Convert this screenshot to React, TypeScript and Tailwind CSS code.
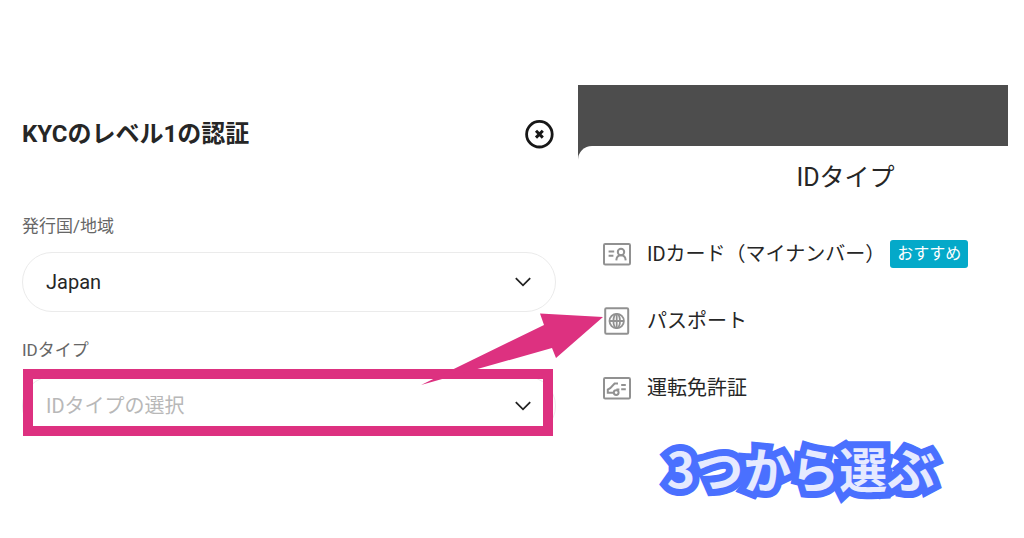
import { useState } from "react";
import type { ReactNode } from "react";

interface IdOption {
  value: string;
  label: string;
  icon: ReactNode;
  recommended?: boolean;
}

const CardIcon = () => (
  <svg viewBox="0 0 28 28" className="size-7" fill="none" stroke="#919191" strokeWidth="2" aria-hidden="true">
    <rect x="1" y="4" width="26" height="20.4" rx="1.2" />
    <path d="M5.6 11.6h5.6M5.6 15.8h4.8" />
    <circle cx="18" cy="12" r="3.2" />
    <path d="M13.3 20.4c.2-3.2 2-5.1 4.7-5.1s4.5 1.9 4.7 5.1" />
  </svg>
);

const PassportIcon = () => (
  <svg viewBox="0 0 28 28" className="size-7" fill="none" stroke="#919191" strokeWidth="2" aria-hidden="true">
    <rect x="2.2" y="1.2" width="23" height="25.6" rx="1.2" />
    <g strokeWidth="1.8">
      <circle cx="13.7" cy="14" r="7.2" />
      <ellipse cx="13.7" cy="14" rx="3.3" ry="7.2" />
      <path d="M6.5 14h14.4M13.7 7v14" />
    </g>
  </svg>
);

const LicenseIcon = () => (
  <svg viewBox="0 0 28 28" className="size-7" fill="none" stroke="#919191" strokeWidth="2" aria-hidden="true">
    <rect x="1" y="4" width="26" height="20.4" rx="1.2" />
    <path d="M15 9.6h-3.4l-4.4 4.6-2.4 1.4v3.2h5.6M16.4 15.4h-3" />
    <circle cx="13.2" cy="18.6" r="2.4" />
    <path d="M18.2 11h4.6M18.2 15.2h4.6" />
  </svg>
);

const ChevronIcon = () => (
  <svg
    viewBox="0 0 16 10"
    className="pointer-events-none absolute top-1/2 right-[25px] h-[10px] w-4 -translate-y-1/2"
    fill="none"
    stroke="#222"
    strokeWidth="1.8"
    aria-hidden="true"
  >
    <path d="M.8 1.2 8 8.3l7.2-7.1" />
  </svg>
);

const idOptions: IdOption[] = [
  { value: "card", label: "IDカード（マイナンバー）", icon: <CardIcon />, recommended: true },
  { value: "passport", label: "パスポート", icon: <PassportIcon /> },
  { value: "license", label: "運転免許証", icon: <LicenseIcon /> },
];

const selectClass =
  "block h-[60px] w-full appearance-none rounded-full border border-[#ebebeb] bg-white px-[23px] text-xl outline-none";

export default function App() {
  const [country, setCountry] = useState("jp");
  const [idType, setIdType] = useState("");

  return (
    <main className="grid grid-cols-[534fr_430fr] items-start gap-[22px] bg-white pr-4 pl-[22px] font-['Roboto','Noto_Sans_CJK_JP',sans-serif] text-[#262626]">
      <form className="pt-[116px]" onSubmit={(e) => e.preventDefault()}>
        <div className="flex items-center justify-between pr-[2px]">
          <h1 className="text-2xl leading-9 font-bold">KYCのレベル1の認証</h1>
          <button type="button" aria-label="閉じる">
            <svg viewBox="0 0 30 30" className="size-[30px]" fill="none" stroke="#171717" aria-hidden="true">
              <circle cx="15.4" cy="15.2" r="12.8" strokeWidth="2.8" />
              <path d="m12 11.8 6.8 6.8m0-6.8-6.8 6.8" strokeWidth="3" />
            </svg>
          </button>
        </div>

        <label htmlFor="country" className="mt-[62px] block text-[17px] leading-6 text-[#666]">
          発行国/地域
        </label>
        <div className="relative mt-[14px]">
          <select
            id="country"
            value={country}
            onChange={(e) => setCountry(e.target.value)}
            className={selectClass}
          >
            <option value="jp">Japan</option>
          </select>
          <ChevronIcon />
        </div>

        <label htmlFor="id-type" className="mt-[26px] block text-[17px] leading-6 text-[#666]">
          IDタイプ
        </label>
        <div className="relative mt-[14px]">
          <select
            id="id-type"
            value={idType}
            onChange={(e) => setIdType(e.target.value)}
            className={`${selectClass} ${idType ? "" : "text-[#b8b8b8]"}`}
          >
            <option value="">IDタイプの選択</option>
            {idOptions.map((o) => (
              <option key={o.value} value={o.value}>
                {o.label}
              </option>
            ))}
          </select>
          <ChevronIcon />
          {/* highlight frame and the arrow to the list */}
          <div className="pointer-events-none absolute -top-[7px] right-[3px] bottom-0 left-[1px] border-[10px] border-[#dd3180]" />
          <svg
            viewBox="0 0 182 72"
            className="pointer-events-none absolute -top-[63px] -right-[47px] z-10 h-[72px] w-[182px]"
            fill="#dd3180"
            aria-hidden="true"
          >
            <path d="M0 72 123 12 119 .5 182 4 135 45 131 35Z" />
          </svg>
        </div>
      </form>

      <div className="pt-[85px]">
        <section className="bg-[#4d4d4d] pt-[61px]">
          <div className="rounded-tl-[14px] bg-white pl-[25px]">
            <h2 className="pt-[14px] pl-20 text-center text-[25px] leading-9">IDタイプ</h2>
            <ul className="mt-[38px] flex flex-col gap-[27px]">
              {idOptions.map((o) => (
                <li key={o.value}>
                  <button
                    type="button"
                    onClick={() => setIdType(o.value)}
                    className="flex h-10 w-full items-center text-left"
                  >
                    {o.icon}
                    <span className="ml-4 text-xl leading-7">{o.label}</span>
                    {o.recommended && (
                      <span className="ml-[5px] rounded-[3px] bg-[#04a9c9] px-[7px] text-base leading-7 text-white">
                        おすすめ
                      </span>
                    )}
                  </button>
                </li>
              ))}
            </ul>
          </div>
        </section>
        <p className="mt-[23px] pl-4 text-center font-['Noto_Sans_CJK_JP',sans-serif] text-5xl leading-[72px] font-bold text-[#e6eaff] [-webkit-text-stroke:14px_#4a70ff] [paint-order:stroke_fill]">
          3つから選ぶ
        </p>
      </div>
    </main>
  );
}
